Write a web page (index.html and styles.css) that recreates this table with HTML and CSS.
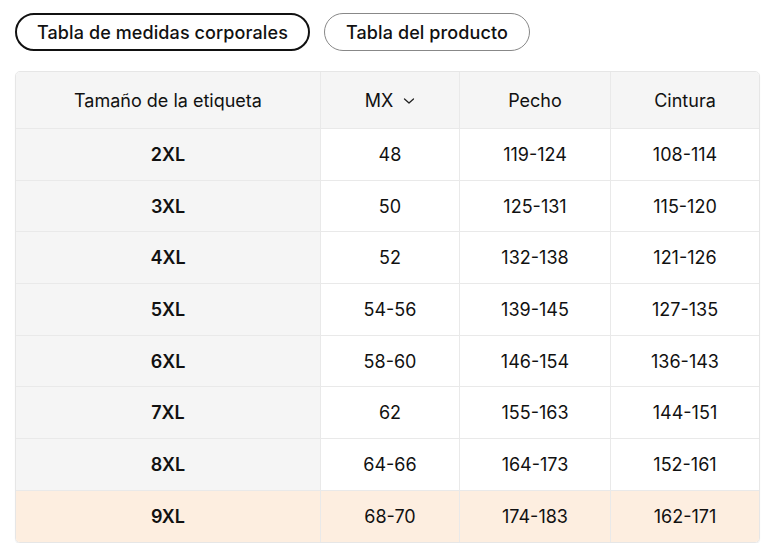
FILE: index.html
```html
<!DOCTYPE html>
<html lang="es">
<head>
<meta charset="utf-8">
<link rel="stylesheet" href="styles.css">
</head>
<body>
<div class="page">
  <div class="tabs">
    <button class="tab tab-active">Tabla de medidas corporales</button>
    <button class="tab">Tabla del producto</button>
  </div>
  <div class="table-wrap">
    <table class="sizes">
      <thead>
        <tr>
          <th class="c1">Tamaño de la etiqueta</th>
          <th class="c2"><span class="mx">MX <svg class="chev" width="12" height="8" viewBox="0 0 12 8"><path d="M1.5 2 L6 6 L10.5 2" fill="none" stroke="#222" stroke-width="1.3" stroke-linecap="round" stroke-linejoin="round"/></svg></span></th>
          <th class="c3">Pecho</th>
          <th class="c4">Cintura</th>
        </tr>
      </thead>
      <tbody>
        <tr><td class="label">2XL</td><td>48</td><td>119-124</td><td>108-114</td></tr>
        <tr><td class="label">3XL</td><td>50</td><td>125-131</td><td>115-120</td></tr>
        <tr><td class="label">4XL</td><td>52</td><td>132-138</td><td>121-126</td></tr>
        <tr><td class="label">5XL</td><td>54-56</td><td>139-145</td><td>127-135</td></tr>
        <tr><td class="label">6XL</td><td>58-60</td><td>146-154</td><td>136-143</td></tr>
        <tr><td class="label">7XL</td><td>62</td><td>155-163</td><td>144-151</td></tr>
        <tr><td class="label">8XL</td><td>64-66</td><td>164-173</td><td>152-161</td></tr>
        <tr class="hl"><td class="label">9XL</td><td>68-70</td><td>174-183</td><td>162-171</td></tr>
      </tbody>
    </table>
  </div>
</div>
</body>
</html>
```

FILE: styles.css
```css
html, body {
  margin: 0;
  padding: 0;
  background: #fff;
}
body {
  font-family: Inter, "Noto Sans", sans-serif;
  color: #111;
}
.page {
  padding: 13px 16px 0 15px;
}
.tabs {
  display: flex;
  gap: 14px;
}
.tab {
  font-family: inherit;
  font-size: 18px;
  font-weight: 500;
  color: #111;
  background: #fff;
  height: 38px;
  padding: 0 21px;
  border-radius: 19px;
  border: 1px solid #888;
  letter-spacing: 0.1px;
}
.tab-active {
  border: 2px solid #111;
  padding: 0 20px;
}
.table-wrap {
  margin-top: 20px;
  border: 1px solid #e6e6e6;
  border-radius: 5px;
  overflow: hidden;
  box-shadow: 0 1px 1px rgba(0,0,0,0.08);
  width: 743px;
}
.sizes {
  width: 100%;
  border-collapse: collapse;
  table-layout: fixed;
  font-size: 18px;
}
.sizes th, .sizes td {
  text-align: center;
  border: 1px solid #e9e9e9;
  padding: 0;
}
.sizes tr > :first-child { border-left: none; }
.sizes tr > :last-child { border-right: none; }
.sizes thead th { border-top: none; }
.sizes tbody tr:last-child td { border-bottom: none; }
.sizes th {
  height: 56px;
  font-weight: 400;
  background: #f5f5f5;
}
.c1 { width: 304px; }
.c2 { width: 138px; }
.c3 { width: 150px; }
.sizes td {
  height: 50.7px;
}
.sizes td.label {
  font-weight: 600;
  background: #f5f5f5;
}
.mx {
  display: inline-flex;
  align-items: center;
  gap: 10px;
}
.chev { display: block; margin-top: 1px; }
.sizes tr.hl td,
.sizes tr.hl td.label {
  background: #fdeee0;
}
```
